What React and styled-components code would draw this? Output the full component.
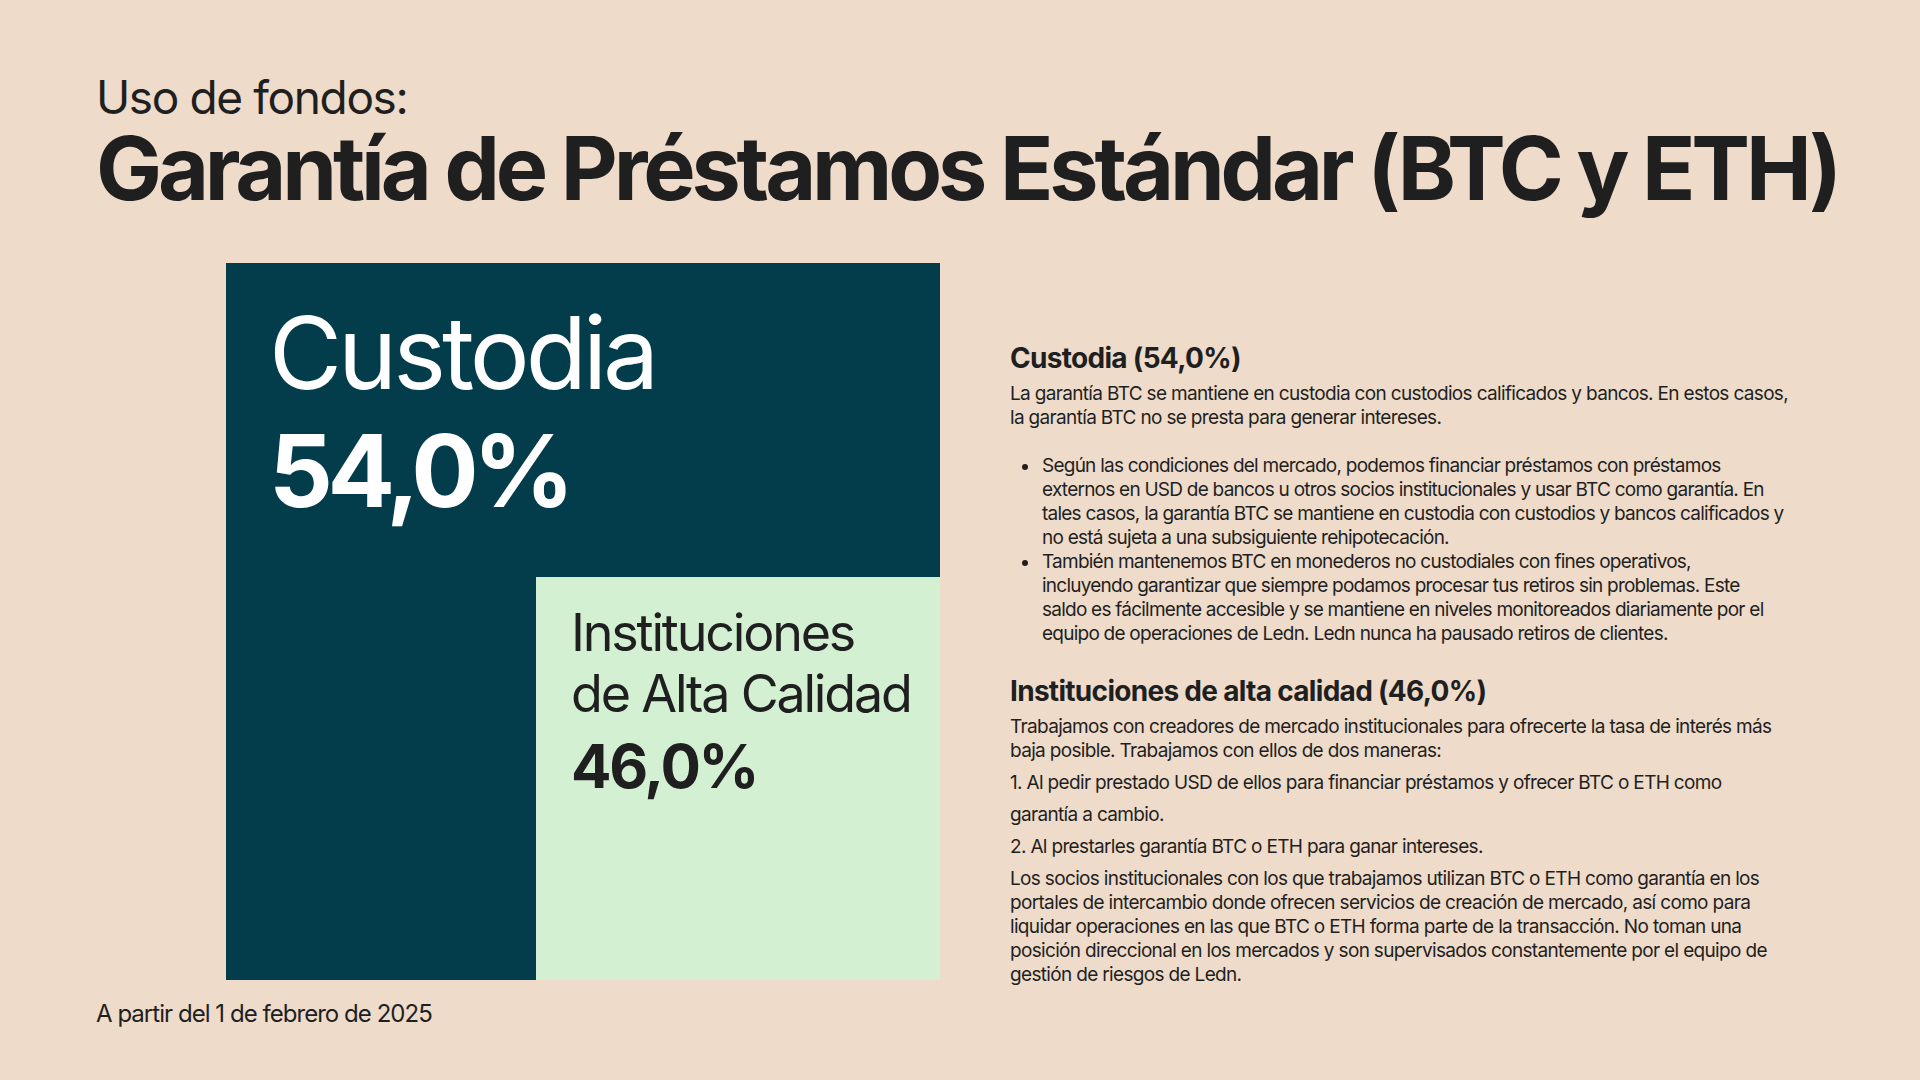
import styled, { createGlobalStyle } from "styled-components";

const GlobalStyle = createGlobalStyle`
  html, body {
    margin: 0;
    padding: 0;
    background: #eedbca;
  }
  body {
    font-family: Inter, "Noto Sans", sans-serif;
    color: #1f1f1f;
  }
`;

const Page = styled.div`
  width: 1920px;
  height: 1080px;
  box-sizing: border-box;
  padding: 74px 0 0 96px;
  background: #eedbca;
  overflow: hidden;
`;

const Eyebrow = styled.div`
  font-size: 46px;
  line-height: 1;
  font-weight: 400;
  letter-spacing: -0.03em;
`;

const Title = styled.h1`
  margin: 4px 0 0;
  font-size: 88px;
  line-height: 1;
  font-weight: 700;
  letter-spacing: -0.047em;
`;

const Content = styled.div`
  display: flex;
  gap: 70px;
  margin-top: 51px;
  padding-left: 130px;
`;

const Chart = styled.div`
  width: 714px;
  height: 717px;
  background: #033d4b;
  display: flex;
  flex-direction: column;
`;

const Label = styled.div`
  color: ${(p) => p.$color};
  padding: ${(p) => p.$padding};
`;

const LabelName = styled.div`
  font-size: ${(p) => p.$size}px;
  line-height: ${(p) => p.$lh}px;
  font-weight: 400;
  letter-spacing: ${(p) => p.$ls}em;
`;

const LabelValue = styled.div`
  font-size: ${(p) => p.$size}px;
  line-height: ${(p) => p.$lh}px;
  font-weight: 700;
  letter-spacing: ${(p) => p.$ls}em;
  margin-top: ${(p) => p.$gap || 0}px;
`;

const GreenRow = styled.div`
  margin-top: auto;
  display: flex;
  justify-content: flex-end;
`;

const GreenBox = styled.div`
  width: 404px;
  height: 403px;
  background: #d4f0d3;
`;

const TextColumn = styled.div`
  width: 790px;
  padding-top: 79px;
`;

const Heading = styled.h2`
  margin: ${(p) => p.$top || 0}px 0 8px;
  font-size: 28px;
  line-height: 32px;
  font-weight: 700;
  letter-spacing: -0.025em;
`;

const Para = styled.p`
  margin: ${(p) => p.$top ?? 4}px 0 0;
  font-size: 19px;
  line-height: ${(p) => p.$lh || 24}px;
  letter-spacing: -0.035em;
`;

const List = styled.ul`
  margin: 24px 0 0;
  padding: 0;
  list-style: none;
`;

const Item = styled.li`
  display: flex;
  font-size: 19px;
  line-height: 24px;
  letter-spacing: -0.04em;
`;

const Dot = styled.span`
  flex: none;
  width: 6px;
  height: 6px;
  border-radius: 50%;
  background: #1f1f1f;
  margin: 10px 14px 0 12px;
`;

const Footer = styled.div`
  margin-top: 12px;
  font-size: 24px;
  line-height: 29px;
  letter-spacing: -0.04em;
`;

export default function App() {
  return (
    <Page>
      <GlobalStyle />
      <Eyebrow>Uso de fondos:</Eyebrow>
      <Title>Garantía de Préstamos Estándar (BTC y ETH)</Title>
      <Content>
        <Chart>
          <Label $color="#ffffff" $padding="31px 0 0 43px">
            <LabelName $size={100} $lh={118} $ls={-0.04}>
              Custodia
            </LabelName>
            <LabelValue $size={100} $lh={118} $ls={-0.055}>
              54,0%
            </LabelValue>
          </Label>
          <GreenRow>
            <GreenBox>
              <Label $color="#1f1f1f" $padding="25px 0 0 35px">
                <LabelName $size={52} $lh={61} $ls={-0.042}>
                  Instituciones
                </LabelName>
                <LabelName $size={52} $lh={61} $ls={-0.042}>
                  de Alta Calidad
                </LabelName>
                <LabelValue $size={60} $lh={66} $ls={-0.037} $gap={9}>
                  46,0%
                </LabelValue>
              </Label>
            </GreenBox>
          </GreenRow>
        </Chart>
        <TextColumn>
          <Heading>Custodia (54,0%)</Heading>
          <Para $top={0}>
            La garantía BTC se mantiene en custodia con custodios calificados y
            bancos. En estos casos, la garantía BTC no se presta para generar
            intereses.
          </Para>
          <List>
            <Item>
              <Dot />
              <span>
                Según las condiciones del mercado, podemos financiar préstamos
                con préstamos
                <br />
                externos en USD de bancos u otros socios institucionales y usar
                BTC como garantía. En
                <br />
                tales casos, la garantía BTC se mantiene en custodia con
                custodios y bancos calificados y
                <br />
                no está sujeta a una subsiguiente rehipotecación.
              </span>
            </Item>
            <Item>
              <Dot />
              <span>
                También mantenemos BTC en monederos no custodiales con fines
                operativos,
                <br />
                incluyendo garantizar que siempre podamos procesar tus retiros
                sin problemas. Este
                <br />
                saldo es fácilmente accesible y se mantiene en niveles
                monitoreados diariamente por el
                <br />
                equipo de operaciones de Ledn. Ledn nunca ha pausado retiros de
                clientes.
              </span>
            </Item>
          </List>
          <Heading $top={29}>Instituciones de alta calidad (46,0%)</Heading>
          <Para $top={0}>
            Trabajamos con creadores de mercado institucionales para ofrecerte
            la tasa de interés más baja posible. Trabajamos con ellos de dos
            maneras:
          </Para>
          <Para $lh={32}>
            1. Al pedir prestado USD de ellos para financiar préstamos y ofrecer
            BTC o ETH como
            <br />
            garantía a cambio.
          </Para>
          <Para $lh={32} $top={0}>
            2. Al prestarles garantía BTC o ETH para ganar intereses.
          </Para>
          <Para>
            Los socios institucionales con los que trabajamos utilizan BTC o ETH
            como garantía en los portales de intercambio donde ofrecen servicios
            de creación de mercado, así como para liquidar operaciones en las
            que BTC o ETH forma parte de la transacción. No toman una posición
            direccional en los mercados y son supervisados constantemente por
            el equipo de gestión de riesgos de Ledn.
          </Para>
        </TextColumn>
      </Content>
      <Footer>A partir del 1 de febrero de 2025</Footer>
    </Page>
  );
}
